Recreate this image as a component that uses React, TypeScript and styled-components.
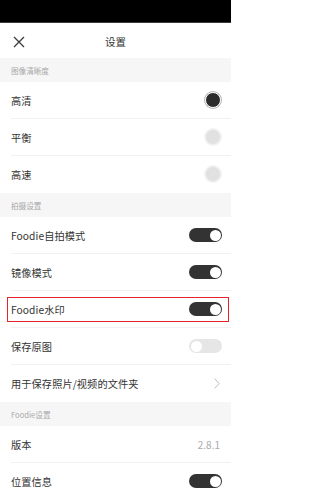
import { FC } from "react";
import styled, { createGlobalStyle } from "styled-components";

const GlobalStyle = createGlobalStyle`
    html, body {
        margin: 0;
        padding: 0;
        background: #ffffff;
    }
    body {
        font-family: "Noto Sans CJK SC", "Noto Sans", sans-serif;
        color: #333333;
    }
`;

const Page = styled.div`
    width: 231px;
    height: 500px;
    overflow: hidden;
    background: #ffffff;
    display: flex;
    flex-direction: column;
`;

const StatusBar = styled.div`
    height: 23px;
    flex-shrink: 0;
    background: #000000;
    border-bottom: 1px solid #3a3a3a;
    box-sizing: border-box;
`;

const Header = styled.div`
    height: 35px;
    flex-shrink: 0;
    display: grid;
    grid-template-columns: 37px 1fr 37px;
    align-items: center;
`;

const CloseButton = styled.div`
    display: flex;
    align-items: center;
    justify-content: center;
    padding-top: 2px;
`;

const Title = styled.div`
    text-align: center;
    font-size: 10.5px;
    color: #333333;
    padding-top: 1px;
`;

const SectionHeader = styled.div`
    height: 24px;
    flex-shrink: 0;
    background: #f6f6f6;
    display: flex;
    align-items: center;
    padding-left: 11px;
    font-size: 7.6px;
    color: #a8a8a8;
`;

const Row = styled.div<{ $divider?: boolean }>`
    position: relative;
    height: 37px;
    flex-shrink: 0;
    box-sizing: border-box;
    margin-left: 11px;
    padding-right: 9px;
    display: flex;
    align-items: center;
    justify-content: space-between;
    border-bottom: 1px solid ${({ $divider }) => ($divider ? "#f1f1f1" : "transparent")};
`;

const Label = styled.span`
    font-size: 10.2px;
    color: #333333;
    letter-spacing: 0.1px;
`;

const Value = styled.span`
    font-size: 10px;
    color: #ababab;
    padding-right: 2px;
`;

const Highlight = styled.div`
    position: absolute;
    left: -4px;
    right: 2px;
    top: 6px;
    bottom: 5px;
    border: 1.2px solid #e8232a;
    pointer-events: none;
`;

const Radio = styled.div<{ $checked?: boolean }>`
    width: 16px;
    height: 16px;
    border-radius: 50%;
    box-sizing: border-box;
    margin-right: 1px;
    background: ${({ $checked }) => ($checked ? "#2c2c2c" : "#e1e1e1")};
    border: 1px solid ${({ $checked }) => ($checked ? "#ffffff" : "#f0f0f0")};
    box-shadow: 0 0 0 1px ${({ $checked }) => ($checked ? "#bdbdbd" : "#f3f3f3")};
`;

const Track = styled.div<{ $on?: boolean }>`
    width: 33px;
    height: 14px;
    border-radius: 7px;
    background: ${({ $on }) => ($on ? "#333333" : "#e6e6e6")};
    display: flex;
    align-items: center;
    justify-content: ${({ $on }) => ($on ? "flex-end" : "flex-start")};
    padding: 0 1.5px;
    box-sizing: border-box;
`;

const Knob = styled.div`
    width: 11px;
    height: 11px;
    border-radius: 50%;
    background: #ffffff;
`;

const Chevron = styled.div`
    display: flex;
    align-items: center;
    padding-right: 2px;
`;

interface ToggleProps {
    on: boolean,
}

const Toggle: FC<ToggleProps> = ({on}: ToggleProps) => (
    <Track $on={on}>
        <Knob />
    </Track>
);

const App: FC = () => {
    return (
        <Page>
            <GlobalStyle />
            <StatusBar />
            <Header>
                <CloseButton>
                    <svg width="12" height="12" viewBox="0 0 12 12">
                        <path d="M1 1 L11 11 M11 1 L1 11" stroke="#3a3a3a" strokeWidth="1.3" fill="none" />
                    </svg>
                </CloseButton>
                <Title>设置</Title>
                <div />
            </Header>

            <SectionHeader>图像清晰度</SectionHeader>
            <Row $divider>
                <Label>高清</Label>
                <Radio $checked />
            </Row>
            <Row $divider>
                <Label>平衡</Label>
                <Radio />
            </Row>
            <Row>
                <Label>高速</Label>
                <Radio />
            </Row>

            <SectionHeader>拍摄设置</SectionHeader>
            <Row $divider>
                <Label>Foodie自拍模式</Label>
                <Toggle on />
            </Row>
            <Row $divider>
                <Label>镜像模式</Label>
                <Toggle on />
            </Row>
            <Row $divider>
                <Label>Foodie水印</Label>
                <Toggle on />
                <Highlight />
            </Row>
            <Row $divider>
                <Label>保存原图</Label>
                <Toggle on={false} />
            </Row>
            <Row>
                <Label>用于保存照片/视频的文件夹</Label>
                <Chevron>
                    <svg width="6" height="11" viewBox="0 0 6 11">
                        <path d="M0.6 0.6 L5.2 5.5 L0.6 10.4" stroke="#bdbdbd" strokeWidth="1" fill="none" />
                    </svg>
                </Chevron>
            </Row>

            <SectionHeader>Foodie设置</SectionHeader>
            <Row $divider>
                <Label>版本</Label>
                <Value>2.8.1</Value>
            </Row>
            <Row>
                <Label>位置信息</Label>
                <Toggle on />
            </Row>
        </Page>
    )
}

export default App;
